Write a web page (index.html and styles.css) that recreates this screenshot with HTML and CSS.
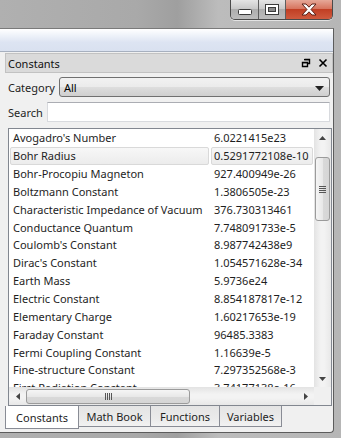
FILE: index.html
```html
<!DOCTYPE html>
<html>
  <head>
    <meta charset="utf-8">
    <title>Constants</title>
    <link rel="stylesheet" href="styles.css">
  </head>
  <body>
    <div class="window">
      <!-- title bar -->
      <div class="titlebar">
        <div class="caption">
          <div class="cap-btn cap-min">
            <svg width="14" height="6" viewBox="0 0 14 6"><rect x="0.5" y="0.5" width="13" height="5" rx="1" fill="#fff" stroke="#3a3a3a"/></svg>
          </div>
          <div class="cap-btn cap-max">
            <svg width="14" height="11" viewBox="0 0 14 11"><rect x="0.5" y="0.5" width="13" height="10" fill="#fff" stroke="#3a3a3a"/><rect x="3.5" y="3.5" width="7" height="4" fill="#8a8a8a" stroke="#3a3a3a"/></svg>
          </div>
          <div class="cap-btn cap-close">
            <svg width="16" height="13" viewBox="0 0 16 13"><path d="M1 1h4l3 3.2L11 1h4l-5 5.5 5 5.5h-4L8 8.8 5 12H1l5-5.5z" fill="#fff" stroke="#5a2016" stroke-width="1" stroke-linejoin="round"/></svg>
          </div>
        </div>
      </div>

      <div class="frame">
        <div class="client">
          <div class="toolbar"></div>

          <div class="dock">
            <div class="dock-title">
              <span class="dock-name">Constants</span>
              <span class="dock-icons">
                <svg width="10" height="10" viewBox="0 0 10 10"><path d="M3.5 1.5h5v4h-2M1.5 4.5h5v4h-5z" fill="none" stroke="#000" stroke-width="1.4"/><path d="M3 1h6v1.3H3zM1 4h6v1.3H1z" fill="#000"/></svg>
                <svg width="10" height="10" viewBox="0 0 10 10"><path d="M1.5 1.5l7 7M8.5 1.5l-7 7" stroke="#000" stroke-width="1.6"/></svg>
              </span>
            </div>

            <div class="field-row">
              <label class="field-label">Category</label>
              <div class="combo">
                <span>All</span>
                <svg width="9" height="5" viewBox="0 0 9 5"><path d="M0 0h9L4.5 5z" fill="#222"/></svg>
              </div>
            </div>

            <div class="field-row search-row">
              <label class="field-label">Search</label>
              <div class="search-input"></div>
            </div>

            <div class="list">
              <div class="list-body">
                <div class="rows">
                  <div class="row"><span class="cell name">Avogadro's Number</span><span class="cell value">6.0221415e23</span></div>
                  <div class="row hover"><span class="cell name">Bohr Radius</span><span class="cell value">0.5291772108e-10</span></div>
                  <div class="row"><span class="cell name">Bohr-Procopiu Magneton</span><span class="cell value">927.400949e-26</span></div>
                  <div class="row"><span class="cell name">Boltzmann Constant</span><span class="cell value">1.3806505e-23</span></div>
                  <div class="row"><span class="cell name">Characteristic Impedance of Vacuum</span><span class="cell value">376.730313461</span></div>
                  <div class="row"><span class="cell name">Conductance Quantum</span><span class="cell value">7.748091733e-5</span></div>
                  <div class="row"><span class="cell name">Coulomb's Constant</span><span class="cell value">8.987742438e9</span></div>
                  <div class="row"><span class="cell name">Dirac's Constant</span><span class="cell value">1.054571628e-34</span></div>
                  <div class="row"><span class="cell name">Earth Mass</span><span class="cell value">5.9736e24</span></div>
                  <div class="row"><span class="cell name">Electric Constant</span><span class="cell value">8.854187817e-12</span></div>
                  <div class="row"><span class="cell name">Elementary Charge</span><span class="cell value">1.60217653e-19</span></div>
                  <div class="row"><span class="cell name">Faraday Constant</span><span class="cell value">96485.3383</span></div>
                  <div class="row"><span class="cell name">Fermi Coupling Constant</span><span class="cell value">1.16639e-5</span></div>
                  <div class="row"><span class="cell name">Fine-structure Constant</span><span class="cell value">7.297352568e-3</span></div>
                  <div class="row"><span class="cell name">First Radiation Constant</span><span class="cell value">3.74177138e-16</span></div>
                </div>
                <div class="vscroll">
                  <div class="sb-btn"><svg width="7" height="4" viewBox="0 0 7 4"><path d="M0 4h7L3.5 0z" fill="#444"/></svg></div>
                  <div class="vtrack">
                    <div class="vthumb">
                      <svg width="7" height="7" viewBox="0 0 7 7"><path d="M0 .5h7M0 2.5h7M0 4.5h7M0 6.5h7" stroke="#555"/></svg>
                    </div>
                  </div>
                  <div class="sb-btn"><svg width="7" height="4" viewBox="0 0 7 4"><path d="M0 0h7L3.5 4z" fill="#444"/></svg></div>
                </div>
              </div>
              <div class="hscroll">
                <div class="sb-btn"><svg width="4" height="7" viewBox="0 0 4 7"><path d="M4 0v7L0 3.5z" fill="#444"/></svg></div>
                <div class="htrack">
                  <div class="hthumb">
                    <svg width="7" height="7" viewBox="0 0 7 7"><path d="M.5 0v7M2.5 0v7M4.5 0v7M6.5 0v7" stroke="#555"/></svg>
                  </div>
                </div>
                <div class="sb-btn"><svg width="4" height="7" viewBox="0 0 4 7"><path d="M0 0v7L4 3.5z" fill="#444"/></svg></div>
                <div class="sb-corner"></div>
              </div>
            </div>

            <div class="tabs">
              <div class="tab active">Constants</div>
              <div class="tab">Math Book</div>
              <div class="tab">Functions</div>
              <div class="tab">Variables</div>
            </div>
          </div>
        </div>
      </div>
    </div>
  </body>
</html>
```

FILE: styles.css
```css
body{margin:0;padding:0;font-family:"Noto Sans","Liberation Sans",Arial,sans-serif;font-size:11px;color:#1e1e1e;background:#bcbcbc}
*{box-sizing:border-box}
.window{width:341px;height:438px;overflow:hidden;display:flex;flex-direction:column;
  background:linear-gradient(to right,#b0b0b0 0%,#a9a9a9 40%,#9f9f9f 52%,#bcbcbc 64%,#b6b6b6 100%)}

/* title bar */
.titlebar{height:28px;display:flex;justify-content:flex-end;padding-right:8px}
.caption{display:flex;height:20px;border:1px solid #4a4a4a;border-top:0;border-radius:0 0 5px 5px;overflow:hidden;box-shadow:0 1px 0 rgba(255,255,255,.6)}
.cap-btn{display:flex;align-items:center;justify-content:center;height:19px}
.cap-min{width:28px;background:linear-gradient(to bottom,#e4e4e4 0%,#c9c9c9 45%,#aeaeae 50%,#bcbcbc 100%);border-right:1px solid #5e5e5e}
.cap-min svg{margin-top:5px}
.cap-max{width:27px;background:linear-gradient(to bottom,#e4e4e4 0%,#c9c9c9 45%,#aeaeae 50%,#bcbcbc 100%);border-right:1px solid #5e5e5e}
.cap-close{width:46px;background:linear-gradient(to bottom,#e6a898 0%,#d7755f 45%,#c13f24 50%,#cf5a3e 100%)}

/* frame + client */
.frame{flex:1;padding:0 7px 5px 0}
.client{height:100%;background:#f0f0f0;border-top:1px solid #7a7a7a;border-right:1px solid #5c5c5c;border-bottom:1px solid #5c5c5c;border-radius:0 0 4px 0;display:flex;flex-direction:column}
.toolbar{height:23px;background:linear-gradient(to bottom,#ffffff 0%,#eef2f9 30%,#dde4f2 60%,#d9e1f0 100%);border-bottom:1px solid #a7b0bf}

/* dock */
.dock{flex:1;display:flex;flex-direction:column;padding:1px 0 0 5px}
.dock-title{height:20px;display:flex;align-items:center;justify-content:space-between;background:#dadada;border:1px solid #c2c2c2;padding:0 4px 0 2px;color:#111}
.dock-icons{display:flex;gap:7px;align-items:center}
.field-row{display:flex;align-items:center;height:20px;margin-top:4px;padding-left:3px;padding-right:3px}
.search-row{margin-top:5px}
.field-label{color:#1e1e1e;margin-right:4px}
.combo{flex:1;height:20px;display:flex;align-items:center;justify-content:space-between;padding:0 5px 0 4px;border:1px solid #707070;border-radius:3px;
  background:linear-gradient(to bottom,#f2f2f2 0%,#ebebeb 48%,#dddddd 52%,#cfcfcf 100%);color:#000}
.combo svg{margin-top:2px}
.search-input{flex:1;height:20px;background:#fff;border:1px solid #d8dade;border-top-color:#abadb3}

/* list */
.list{margin:6px 1px 0 3px;height:278px;flex:none;border:1px solid #828790;background:#fff;display:flex;flex-direction:column}
.list-body{flex:1;display:flex;overflow:hidden}
.rows{flex:1;padding:0 1px 0 0;overflow:hidden}
.row{display:flex;height:17.85px;align-items:center}
.cell{height:100%;display:flex;align-items:center;white-space:nowrap;overflow:hidden;padding-left:2px;border:1px solid transparent;border-radius:2px}
.name{width:199px;margin-right:2px;margin-left:1px}
.value{width:102px}
.row.hover .cell{background:linear-gradient(to bottom,#f7f7f7 0%,#ececec 100%);border-color:#d9d9d9}

/* scrollbars */
.vscroll{width:17px;display:flex;flex-direction:column;background:linear-gradient(to right,#e3e3e3,#f3f3f3 40%,#f3f3f3 60%,#e8e8e8)}
.sb-btn{width:17px;height:17px;display:flex;align-items:center;justify-content:center;flex:none}
.vtrack{flex:1;padding-top:11px}
.vthumb{height:64px;margin:0 1px;border:1px solid #9b9b9b;border-radius:3px;background:linear-gradient(to right,#f5f5f5,#e8e8e8 50%,#d9d9d9 51%,#d5d5d5);display:flex;align-items:center;justify-content:center}
.hscroll{height:18px;flex:none;display:flex;align-items:center;background:linear-gradient(to bottom,#e3e3e3,#f3f3f3 40%,#f3f3f3 60%,#e8e8e8)}
.htrack{flex:1;padding-right:93px}
.hthumb{width:164px;height:15px;border:1px solid #9b9b9b;border-radius:3px;background:linear-gradient(to bottom,#f5f5f5,#e8e8e8 50%,#d9d9d9 51%,#d5d5d5);display:flex;align-items:center;justify-content:center}
.sb-corner{width:17px;height:18px;background:#f0f0f0}

/* tabs */
.tabs{display:flex;height:23px;align-items:flex-start}
.tab{flex:none;height:21px;padding:0;white-space:nowrap;display:flex;align-items:center;justify-content:center;border:1px solid #898c95;border-top:0;margin-left:-1px;
  background:linear-gradient(to bottom,#e4e4e4 0%,#eaeaea 60%,#f2f2f2 100%);color:#1e1e1e}
.tab:nth-child(2){width:73px}
.tab:nth-child(3){width:70px}
.tab:nth-child(4){width:63px}
.tab.active{width:74px;height:23px;margin-left:0;background:#fff;position:relative;z-index:1}
```
